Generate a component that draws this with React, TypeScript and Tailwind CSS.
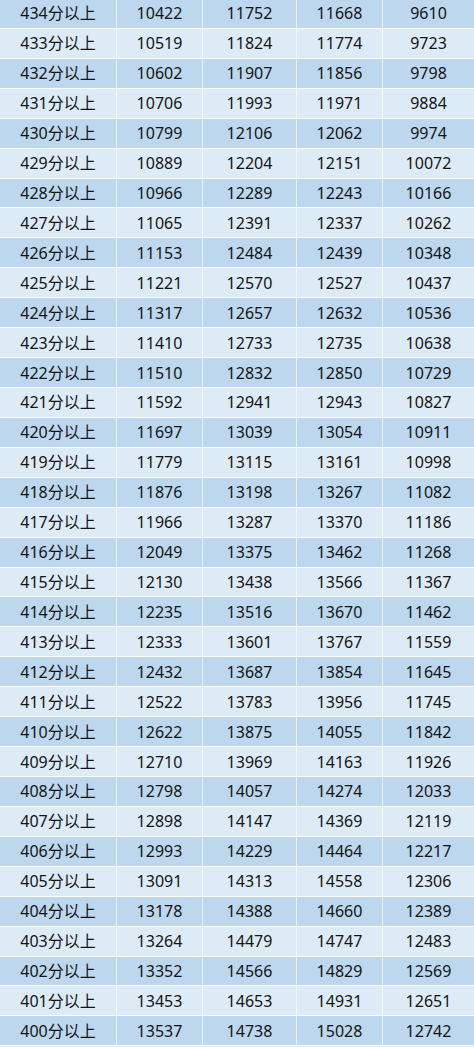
import React from "react";

const rows: [number, number, number, number, number][] = [
  [434, 10422, 11752, 11668, 9610],
  [433, 10519, 11824, 11774, 9723],
  [432, 10602, 11907, 11856, 9798],
  [431, 10706, 11993, 11971, 9884],
  [430, 10799, 12106, 12062, 9974],
  [429, 10889, 12204, 12151, 10072],
  [428, 10966, 12289, 12243, 10166],
  [427, 11065, 12391, 12337, 10262],
  [426, 11153, 12484, 12439, 10348],
  [425, 11221, 12570, 12527, 10437],
  [424, 11317, 12657, 12632, 10536],
  [423, 11410, 12733, 12735, 10638],
  [422, 11510, 12832, 12850, 10729],
  [421, 11592, 12941, 12943, 10827],
  [420, 11697, 13039, 13054, 10911],
  [419, 11779, 13115, 13161, 10998],
  [418, 11876, 13198, 13267, 11082],
  [417, 11966, 13287, 13370, 11186],
  [416, 12049, 13375, 13462, 11268],
  [415, 12130, 13438, 13566, 11367],
  [414, 12235, 13516, 13670, 11462],
  [413, 12333, 13601, 13767, 11559],
  [412, 12432, 13687, 13854, 11645],
  [411, 12522, 13783, 13956, 11745],
  [410, 12622, 13875, 14055, 11842],
  [409, 12710, 13969, 14163, 11926],
  [408, 12798, 14057, 14274, 12033],
  [407, 12898, 14147, 14369, 12119],
  [406, 12993, 14229, 14464, 12217],
  [405, 13091, 14313, 14558, 12306],
  [404, 13178, 14388, 14660, 12389],
  [403, 13264, 14479, 14747, 12483],
  [402, 13352, 14566, 14829, 12569],
  [401, 13453, 14653, 14931, 12651],
  [400, 13537, 14738, 15028, 12742],
];

export default function App() {
  return (
    <div
      className="w-[474px] h-[1047px] overflow-hidden bg-[#ddebf7] text-[#141414] text-[16px]"
      style={{ fontFamily: '"Noto Sans", "Noto Sans CJK SC", sans-serif' }}
    >
      <div className="-mt-px">
        {rows.map((r, i) => (
          <div
            key={r[0]}
            className={
              "grid grid-cols-[117px_86px_94px_86px_1fr] h-[29.93px] border-b border-white " +
              (i % 2 === 0 ? "bg-[#bdd7ee]" : "bg-[#ddebf7]")
            }
          >
            <div className="flex items-center justify-center border-r border-white/70 leading-none">
              {r[0]}分以上
            </div>
            <div className="flex items-center justify-center border-r border-white/70 leading-none">
              {r[1]}
            </div>
            <div className="flex items-center justify-center border-r border-white/70 leading-none">
              {r[2]}
            </div>
            <div className="flex items-center justify-center border-r border-white/70 leading-none">
              {r[3]}
            </div>
            <div className="flex items-center justify-center leading-none">{r[4]}</div>
          </div>
        ))}
      </div>
    </div>
  );
}
